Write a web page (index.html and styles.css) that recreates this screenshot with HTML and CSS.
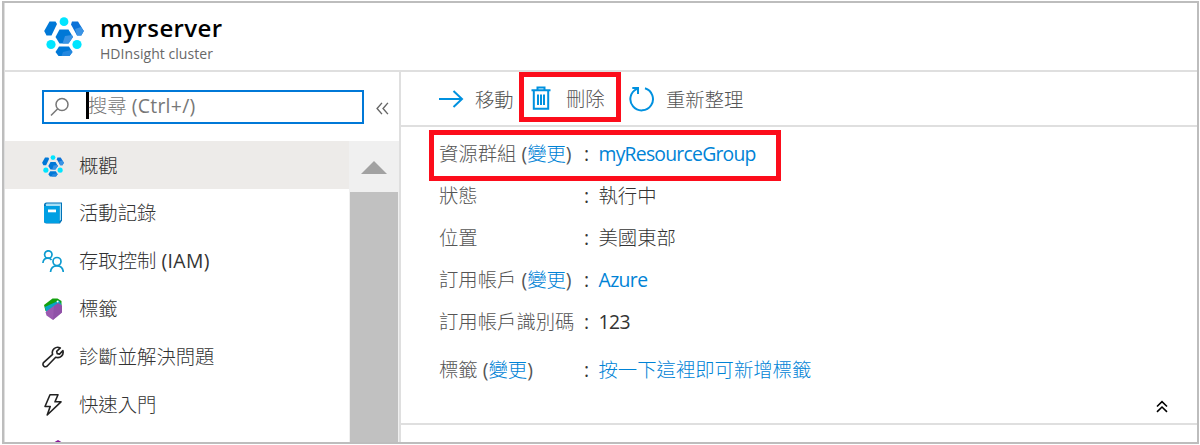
FILE: index.html
```html
<!DOCTYPE html>
<html lang="zh-Hant">
<head>
<meta charset="utf-8">
<title>myrserver</title>
<link rel="stylesheet" href="styles.css">
</head>
<body>
<svg width="0" height="0" class="defs">
  <symbol id="cluster" viewBox="0 0 40 40">
    <path d="M5.500 4.500h6L13 7 7.500 18.500H2.500L.2 14z" fill="#0078d7"/>
    <path d="M28 4.500h6L39.800 14l-2.500 4.500H33L27 7.500z" fill="#0b72d8"/>
    <path d="M31 12l6-2 2.800 4-2.500 4.500H33z" fill="#3a93e4"/>
    <path d="M15.500 12.500h9l4.500 7.500-4.500 6.500h-9L11.500 20z" fill="#0078d7"/>
    <path d="M21 19l7-1 1 2-4.500 6.500h-6z" fill="#3a93e4"/>
    <path d="M15 29.500h10l3.500 5.500-3 4h-11l-3-4z" fill="#0078d7"/>
    <path d="M19 35l8-2 1.500 2-3 4h-8z" fill="#2588df"/>
    <circle cx="20" cy="4.700" r="4.400" fill="#00e5ff"/>
    <circle cx="7" cy="27.500" r="4.600" fill="#00e5ff"/>
    <circle cx="33" cy="27.500" r="4.600" fill="#00e5ff"/>
  </symbol>
</svg>
<div class="window">
  <header class="header">
    <svg class="logo"><use href="#cluster"/></svg>
    <div class="titles">
      <h1 class="title">myrserver</h1>
      <p class="subtitle">HDInsight cluster</p>
    </div>
  </header>
  <div class="body">
    <aside class="sidebar">
      <div class="search-row">
        <div class="search">
          <svg class="search-icon" viewBox="0 0 20 20"><circle cx="12" cy="7.500" r="6" /><path d="M7.700 11.800L1 18.500"/></svg>
          <span class="caret"></span>
          <span class="placeholder">搜尋 <span class="latin">(Ctrl+/)</span></span>
        </div>
        <svg class="collapse" viewBox="0 0 12 12"><path d="M5.500.8L1 6l4.500 5.200M11 .8L6.500 6l4.500 5.200"/></svg>
      </div>
      <div class="nav-area">
        <nav class="nav">
          <a class="item active"><svg class="icon" viewBox="0 0 22 22"><use href="#cluster"/></svg>概觀</a>
          <a class="item"><svg class="icon" viewBox="0 0 22 22"><path d="M4.500.5H20v18l-2 3H4.500Q2 21.500 2 19V3Q2 .5 4.500.5z" fill="#0072b8"/><path d="M4.500 1.500H19V18l-1.500 1V4H4.200Q2.700 2.500 4.500 1.500z" fill="#a6def5"/><path d="M2 4h15.500v17H4Q2 21 2 19z" fill="#009fe3"/><path d="M6 7.500h8v2.800H6z" fill="#fff"/></svg>活動記錄</a>
          <a class="item"><svg class="icon" viewBox="0 0 22 22" fill="none" stroke="#0d9bd0" stroke-width="1.700"><circle cx="6.300" cy="4.500" r="3.700"/><path d="M.9 13c.3-3 2.300-4.800 4.800-4.800 1.700 0 3 .6 3.800 1.700"/><circle cx="15" cy="11.500" r="4"/><path d="M8.500 22c.4-4 3-6.200 6.400-6.200s6 2.200 6.400 6.200"/></svg>存取控制 <span class="latin">(IAM)</span></a>
          <a class="item"><svg class="icon" viewBox="0 0 22 22"><path d="M2 7L10.500.5h5L19.500 3v4L3.500 13z" fill="#13a10e"/><path d="M2.800 9L17 2.500l2.500 4L5 16z" fill="#0aa5c2"/><path d="M3.500 14L16 5l4 2.500v7L11 22l-6.500-4.500z" fill="#9b59b0"/><path d="M12 8l4-3 4 2.500v7L11 22z" fill="#884ba2" opacity=".6"/><circle cx="15.600" cy="3.600" r="1" fill="#fff"/></svg>標籤</a>
          <a class="item"><svg class="icon" viewBox="0 0 22 22" fill="none" stroke="#222" stroke-width="1.600" stroke-linejoin="round"><path d="M18.300 1.900L14.700 5.300l.5 2.300 2.300.5 3.400-3.500c1.200 4.300-2.500 8.200-7.200 6.600L5.500 19.800C3.200 22.600-.8 18.900 1.800 16.400L10.600 8.300C9.100 3.800 13.600-.1 18.300 1.900z"/></svg>診斷並解決問題</a>
          <a class="item"><svg class="icon" viewBox="0 0 22 22" fill="none" stroke="#222" stroke-width="1.600" stroke-linejoin="round"><path d="M8 .8h8l-3 7h6L5.200 21l3-8.500H3z"/></svg>快速入門</a>
          <a class="item"><svg class="icon partial" viewBox="0 0 22 22"><path d="M16 0l5 3v5H11V3z" fill="#881798"/></svg></a>
        </nav>
        <div class="scrollbar"><div class="up"></div><div class="thumb"></div></div>
      </div>
    </aside>
    <main class="main">
      <div class="toolbar">
        <div class="tool move"><svg viewBox="0 0 26 26" width="26" height="26"><path d="M1 12h23M15.500 4l8.500 8-8.500 8"/></svg>移動</div>
        <div class="tool delete"><svg viewBox="0 0 20 26" width="20" height="26"><path d="M.5 4.300h19M6.500 4V1.500h7V4M2.800 4.500v18.200h14.400V4.500M7 8.500V19M10 8.500V19M13 8.500V19"/></svg>刪除</div>
        <div class="tool refresh"><svg viewBox="0 0 26 26" width="26" height="26"><path d="M16 1.300A11.300 11.300 0 1 1 8 1.800M3.300 1H9v6"/></svg>重新整理</div>
      </div>
      <section class="details">
        <dl class="list">
          <div class="row boxed"><dt>資源群組 <span class="latin">(<a>變更</a>)</span></dt><i>:</i><dd class="link group">myResourceGroup</dd></div>
          <div class="row"><dt>狀態</dt><i>:</i><dd>執行中</dd></div>
          <div class="row"><dt>位置</dt><i>:</i><dd>美國東部</dd></div>
          <div class="row"><dt>訂用帳戶 <span class="latin">(<a>變更</a>)</span></dt><i>:</i><dd class="link azure">Azure</dd></div>
          <div class="row"><dt>訂用帳戶識別碼</dt><i>:</i><dd class="number">123</dd></div>
          <div class="row tags"><dt>標籤 <span class="latin">(<a>變更</a>)</span></dt><i>:</i><dd class="link">按一下這裡即可新增標籤</dd></div>
        </dl>
        <svg class="fold" viewBox="0 0 12 12"><path d="M1 6l5-4.800L11 6M1 11.300l5-4.800 5 4.800"/></svg>
      </section>
    </main>
  </div>
</div>
</body>
</html>
```
FILE: styles.css
```css
* { box-sizing: border-box; }
body {
  margin: 0;
  height: 445px;
  overflow: hidden;
  padding: 1px 1px 1px 2px;
  background: #fff;
  color: #333;
  font-family: "Open Sans", "Noto Sans CJK TC", sans-serif;
  font-weight: 300;
  font-size: 19.350px;
}
.defs { position: absolute; }
.window {
  height: 443px;
  display: flex;
  flex-direction: column;
  border: 2px solid #bdbdbd;
  overflow: hidden;
}
.header {
  flex: 0 0 69px;
  display: flex;
  gap: 16px;
  padding: 14px 0 0 40px;
  border-bottom: 2px solid #dfdfdf;
  border-left: 1px solid #dfdfdf;
}
.logo { width: 40px; height: 40px; margin-left: -1px; }
.title, .subtitle { margin: 0; white-space: nowrap; }
.title {
  color: #000;
  font: 600 24px/24px "Open Sans", sans-serif;
  letter-spacing: .4px;
  margin-top: -1px;
}
.subtitle {
  color: #686868;
  font: 400 14px/18px "Open Sans", sans-serif;
  letter-spacing: .05px;
  margin-top: 5px;
}
.body { flex: 1; min-height: 0; display: flex; }
.sidebar {
  flex: 0 0 397px;
  display: flex;
  flex-direction: column;
  border-left: 1px solid #dfdfdf;
  border-right: 2px solid #dfdfdf;
}
.search-row { flex: 0 0 69px; display: flex; padding: 18px 0 0 37px; }
.search {
  width: 322px;
  height: 34px;
  border: 2px solid #0078d7;
  display: flex;
  align-items: center;
}
.search-icon { width: 20px; height: 20px; margin-left: 6px; fill: none; stroke: #777; stroke-width: 1.500; }
.caret { width: 3px; height: 27px; margin-left: 16px; margin-top: -3px; background: #000; }
.placeholder { color: #777; line-height: 28px; margin-left: -1px; margin-top: -3px; }
.placeholder .latin { letter-spacing: .3px; }
.collapse { width: 13px; height: 13px; margin: 12px 0 0 12px; fill: none; stroke: #666; stroke-width: 1.300; }
.nav-area { flex: 1; min-height: 0; display: flex; overflow: hidden; }
.nav { flex: 1; }
.item { height: 47.800px; display: flex; align-items: center; padding: 1.500px 0 0 37px; white-space: pre; line-height: 28px; }
.item.active { background: #edebe9; }
.item .latin { letter-spacing: .4px; }
.icon { width: 22px; height: 22px; margin-right: 15px; }
.partial { margin-top: -2px; }
.scrollbar { width: 50px; padding: 0 1px 0 1px; background: #f0f0f0; display: flex; flex-direction: column; }
.up { flex: 0 0 51px; display: flex; justify-content: center; padding-top: 20px; }
.up::before { content: ""; width: 26px; height: 13px; background: #a2a2a2; clip-path: polygon(50% 0, 100% 100%, 0 100%); }
.thumb { flex: 1; background: #c1c1c1; }
.main { flex: 1; display: flex; flex-direction: column; }
.toolbar {
  flex: 0 0 55px;
  display: flex;
  border-bottom: 2px solid #dfdfdf;
  color: #555;
}
.tool { display: flex; align-items: center; height: 50px; line-height: 28px; }
.tool svg { fill: none; stroke: #0091df; stroke-width: 2; }
.move { width: 118px; padding: 5px 0 0 37px; }
.move svg { margin-right: 11px; }
.delete { width: 102px; border: 5px solid #fc0d1b; padding: 4px 0 0 7px; }
.delete svg { margin-right: 15px; }
.refresh { padding: 5px 0 0 8px; }
.refresh svg { margin-right: 11px; }
.details {
  flex: 0 0 298px;
  display: flex;
  justify-content: space-between;
  align-items: flex-end;
  border-bottom: 2px solid #dfdfdf;
}
.list { margin: 0; padding: 3px 0 0 28px; align-self: flex-start; }
.row {
  display: grid;
  grid-template-columns: 145px 14.500px auto;
  align-items: center;
  width: 352px;
  height: 42px;
  padding-left: 10px;
  white-space: nowrap;
  line-height: 28px;
}
.row.boxed { height: 51px; margin-bottom: -6px; padding: 0 0 3px 5px; border: 5px solid #fc0d1b; }
.row.tags { margin-top: 6px; }
dt { color: #555; }
dd { margin: 0; }
i { font-style: normal; font-weight: 400; }
.row a, .link { color: #0083d6; }
.latin { font-weight: 400; }
.latin a { font-weight: 300; letter-spacing: 0; }
.group, .azure, .number { font-weight: 400; letter-spacing: -.6px; }
.group { letter-spacing: -.75px; }
.fold { width: 12px; height: 13px; margin: 0 29px 10px 0; fill: none; stroke: #000; stroke-width: 1.600; }
```
